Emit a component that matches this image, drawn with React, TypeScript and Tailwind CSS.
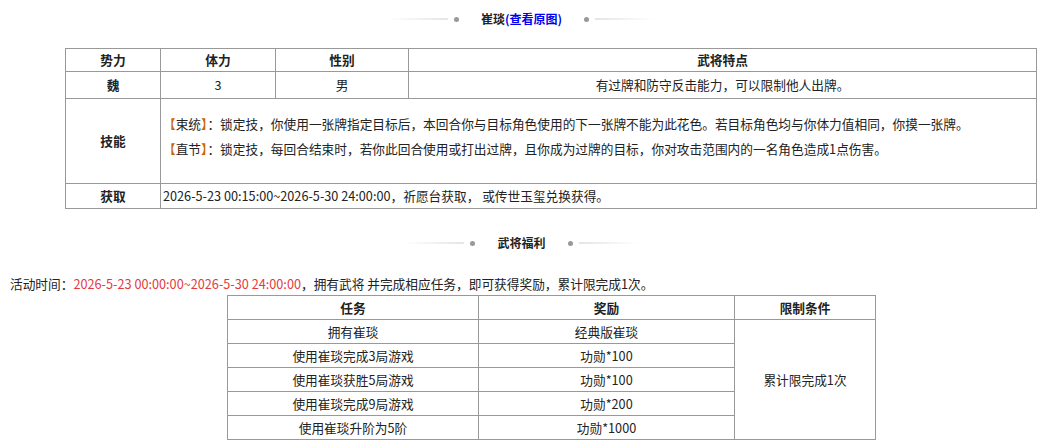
import * as React from 'react';

const Title = ({ children }: { children: React.ReactNode }) => (
    <div className="flex items-center justify-center gap-[6px] h-[38px]">
        <div className="w-[60px] h-[2px] bg-gradient-to-r from-transparent to-[#e5e5e5]" />
        <div className="w-[5px] h-[5px] rounded-full bg-[#999]" />
        <div className="font-bold text-[12px] px-[16px]">{children}</div>
        <div className="w-[5px] h-[5px] rounded-full bg-[#999]" />
        <div className="w-[60px] h-[2px] bg-gradient-to-l from-transparent to-[#e5e5e5]" />
    </div>
);

const td = 'border border-[#999] text-center';

export default function App() {
    const tasks = [
        ['拥有崔琰', '经典版崔琰'],
        ['使用崔琰完成3局游戏', '功勋*100'],
        ['使用崔琰获胜5局游戏', '功勋*100'],
        ['使用崔琰完成9局游戏', '功勋*200'],
        ['使用崔琰升阶为5阶', '功勋*1000'],
    ];
    return (
        <div className="w-[1043px] h-[448px] bg-white text-[12.7px] text-[#222] overflow-hidden" style={{ fontFamily: '"Microsoft YaHei", "Noto Sans CJK SC", sans-serif' }}>
            <Title>崔琰<span className="text-[#0000ee]">(查看原图)</span></Title>
            <div className="pl-[65px] pt-[10px]">
                <table className="w-[972px] border-collapse">
                    <tbody>
                        <tr className="h-[23px] font-bold">
                            <td className={`${td} w-[95px]`}>势力</td>
                            <td className={`${td} w-[115px]`}>体力</td>
                            <td className={`${td} w-[133px]`}>性别</td>
                            <td className={td}>武将特点</td>
                        </tr>
                        <tr className="h-[27px]">
                            <td className={`${td} font-bold`}>魏</td>
                            <td className={td}>3</td>
                            <td className={td}>男</td>
                            <td className={td}>有过牌和防守反击能力，可以限制他人出牌。</td>
                        </tr>
                        <tr className="h-[85px]">
                            <td className={`${td} font-bold`}>技能</td>
                            <td colSpan={3} className="border border-[#999] text-left px-[2px] pb-[10px] leading-[25px]">
                                <div><span className="text-[#c60]">【</span>束统<span className="text-[#c60]">】</span>：锁定技，你使用一张牌指定目标后，本回合你与目标角色使用的下一张牌不能为此花色。若目标角色均与你体力值相同，你摸一张牌。</div>
                                <div><span className="text-[#c60]">【</span>直节<span className="text-[#c60]">】</span>：锁定技，每回合结束时，若你此回合使用或打出过牌，且你成为过牌的目标，你对攻击范围内的一名角色造成1点伤害。</div>
                            </td>
                        </tr>
                        <tr className="h-[25px]">
                            <td className={`${td} font-bold`}>获取</td>
                            <td colSpan={3} className="border border-[#999] text-left px-[2px]">2026-5-23 00:15:00~2026-5-30 24:00:00，祈愿台获取， 或传世玉玺兑换获得。</td>
                        </tr>
                    </tbody>
                </table>
            </div>
            <div className="pt-[15px]">
                <Title>武将福利</Title>
            </div>
            <div className="pl-[10px] pt-[11px] h-[33px] leading-[22px]">
                活动时间：<span className="text-[#e4393c]">2026-5-23 00:00:00~2026-5-30 24:00:00</span>，拥有武将 并完成相应任务，即可获得奖励，累计限完成1次。
            </div>
            <div className="pl-[227px]">
                <table className="w-[649px] border-collapse">
                    <tbody>
                        <tr className="h-[24px] font-bold">
                            <td className={`${td} w-[251px]`}>任务</td>
                            <td className={`${td} w-[256px]`}>奖励</td>
                            <td className={td}>限制条件</td>
                        </tr>
                        {tasks.map(([t, r], i) => (
                            <tr key={t} className="h-[24px]">
                                <td className={td}>{t}</td>
                                <td className={td}>{r}</td>
                                {i === 0 && <td rowSpan={5} className={td}>累计限完成1次</td>}
                            </tr>
                        ))}
                    </tbody>
                </table>
            </div>
        </div>
    );
}
